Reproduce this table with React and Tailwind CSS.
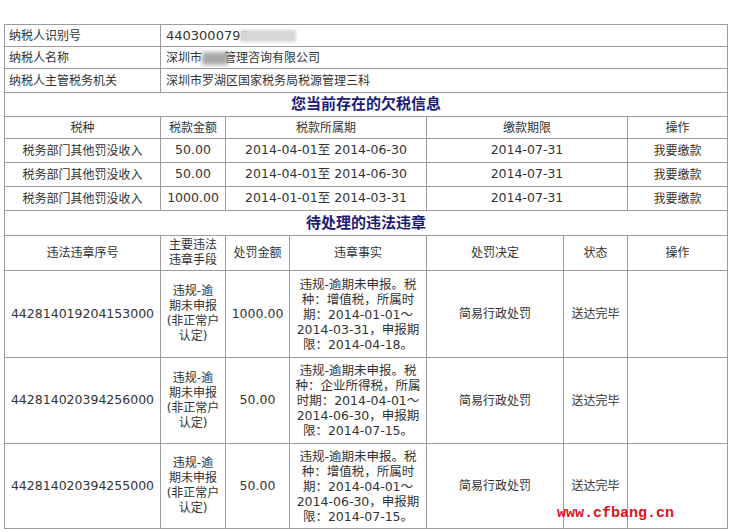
import React from "react";

const td = "border border-[#9c9c9c] text-center align-middle p-0";
const num = "text-[12.5px]";

const taxRows = [
  ["税务部门其他罚没收入", "50.00", "2014-04-01至 2014-06-30", "2014-07-31"],
  ["税务部门其他罚没收入", "50.00", "2014-04-01至 2014-06-30", "2014-07-31"],
  ["税务部门其他罚没收入", "1000.00", "2014-01-01至 2014-03-31", "2014-07-31"],
];

const vioRows = [
  {
    id: "442814019204153000",
    amt: "1000.00",
    h: "h-[87px]",
    fact: ["违规-逾期未申报。税", "种：增值税，所属时", "期：2014-01-01～", "2014-03-31，申报期", "限：2014-04-18。"],
  },
  {
    id: "442814020394256000",
    amt: "50.00",
    h: "h-[86px]",
    fact: ["违规-逾期未申报。税", "种：企业所得税，所属", "时期：2014-04-01～", "2014-06-30，申报期", "限：2014-07-15。"],
  },
  {
    id: "442814020394255000",
    amt: "50.00",
    h: "h-[85px]",
    fact: ["违规-逾期未申报。税", "种：增值税，所属时", "期：2014-04-01～", "2014-06-30，申报期", "限：2014-07-15。"],
  },
];

function Lines({ lines }) {
  return (
    <div className="leading-[15px]">
      {lines.map((l, i) => (
        <div key={i} className="whitespace-nowrap">{l}</div>
      ))}
    </div>
  );
}

export default function App() {
  return (
    <div className="relative w-[755px] h-[532px] overflow-hidden bg-white pt-[24px] pl-[4px] text-[12px] text-[#333] font-['DejaVu_Sans','Noto_Sans_CJK_SC',sans-serif]">
      <table className="border-collapse table-fixed w-[723px]">
        <colgroup>
          <col className="w-[156px]" />
          <col className="w-[65px]" />
          <col className="w-[64px]" />
          <col className="w-[137px]" />
          <col className="w-[137px]" />
          <col className="w-[64px]" />
          <col className="w-[100px]" />
        </colgroup>
        <tbody>
          <tr className="h-[22px]">
            <td className={td + " !text-left pl-[4px]"}>纳税人识别号</td>
            <td colSpan={6} className={td + " !text-left pl-[5px] text-[13px]"}>
              4403000798
              <span className="inline-block align-middle w-[56px] h-[12px] -ml-[9px] bg-[#d6d6d6] blur-[1.5px]" />
            </td>
          </tr>
          <tr className="h-[22px]">
            <td className={td + " !text-left pl-[4px]"}>纳税人名称</td>
            <td colSpan={6} className={td + " !text-left pl-[5px]"}>
              深圳市
              <span className="inline-block align-middle w-[26px] h-[13px] -mr-[4px] bg-[#a9a9a9] blur-[2px]" />
              管理咨询有限公司
            </td>
          </tr>
          <tr className="h-[24px]">
            <td className={td + " !text-left pl-[4px]"}>纳税人主管税务机关</td>
            <td colSpan={6} className={td + " !text-left pl-[5px]"}>深圳市罗湖区国家税务局税源管理三科</td>
          </tr>
          <tr className="h-[24px]">
            <td colSpan={7} className={td + " text-[15px] font-bold text-[#1c1c78]"}>您当前存在的欠税信息</td>
          </tr>
          <tr className="h-[22px]">
            <td className={td}>税种</td>
            <td className={td}>税款金额</td>
            <td colSpan={2} className={td}>税款所属期</td>
            <td colSpan={2} className={td}>缴款期限</td>
            <td className={td}>操作</td>
          </tr>
          {taxRows.map((r, i) => (
            <tr key={i} className="h-[24px]">
              <td className={td}>{r[0]}</td>
              <td className={td + " " + num}>{r[1]}</td>
              <td colSpan={2} className={td + " " + num}>{r[2]}</td>
              <td colSpan={2} className={td + " " + num}>{r[3]}</td>
              <td className={td}>我要缴款</td>
            </tr>
          ))}
          <tr className="h-[25px]">
            <td colSpan={7} className={td + " text-[15px] font-bold text-[#1c1c78]"}>待处理的违法违章</td>
          </tr>
          <tr className="h-[35px]">
            <td className={td}>违法违章序号</td>
            <td className={td + " leading-[15px]"}>主要违法<br />违章手段</td>
            <td className={td}>处罚金额</td>
            <td className={td}>违章事实</td>
            <td className={td}>处罚决定</td>
            <td className={td}>状态</td>
            <td className={td}>操作</td>
          </tr>
          {vioRows.map((r, i) => (
            <tr key={i} className={r.h}>
              <td className={td + " " + num}>{r.id}</td>
              <td className={td}>
                <Lines lines={["违规-逾", "期未申报", "(非正常户", "认定)"]} />
              </td>
              <td className={td + " " + num}>{r.amt}</td>
              <td className={td + " " + num}>
                <Lines lines={r.fact} />
              </td>
              <td className={td}>简易行政处罚</td>
              <td className={td}>送达完毕</td>
              <td className={td}></td>
            </tr>
          ))}
        </tbody>
      </table>
      <div className="absolute left-[557px] top-[505px] text-[15px] leading-[18px] font-bold text-[#e0121c] font-['Liberation_Mono',monospace]">
        www.cfbang.cn
      </div>
    </div>
  );
}
